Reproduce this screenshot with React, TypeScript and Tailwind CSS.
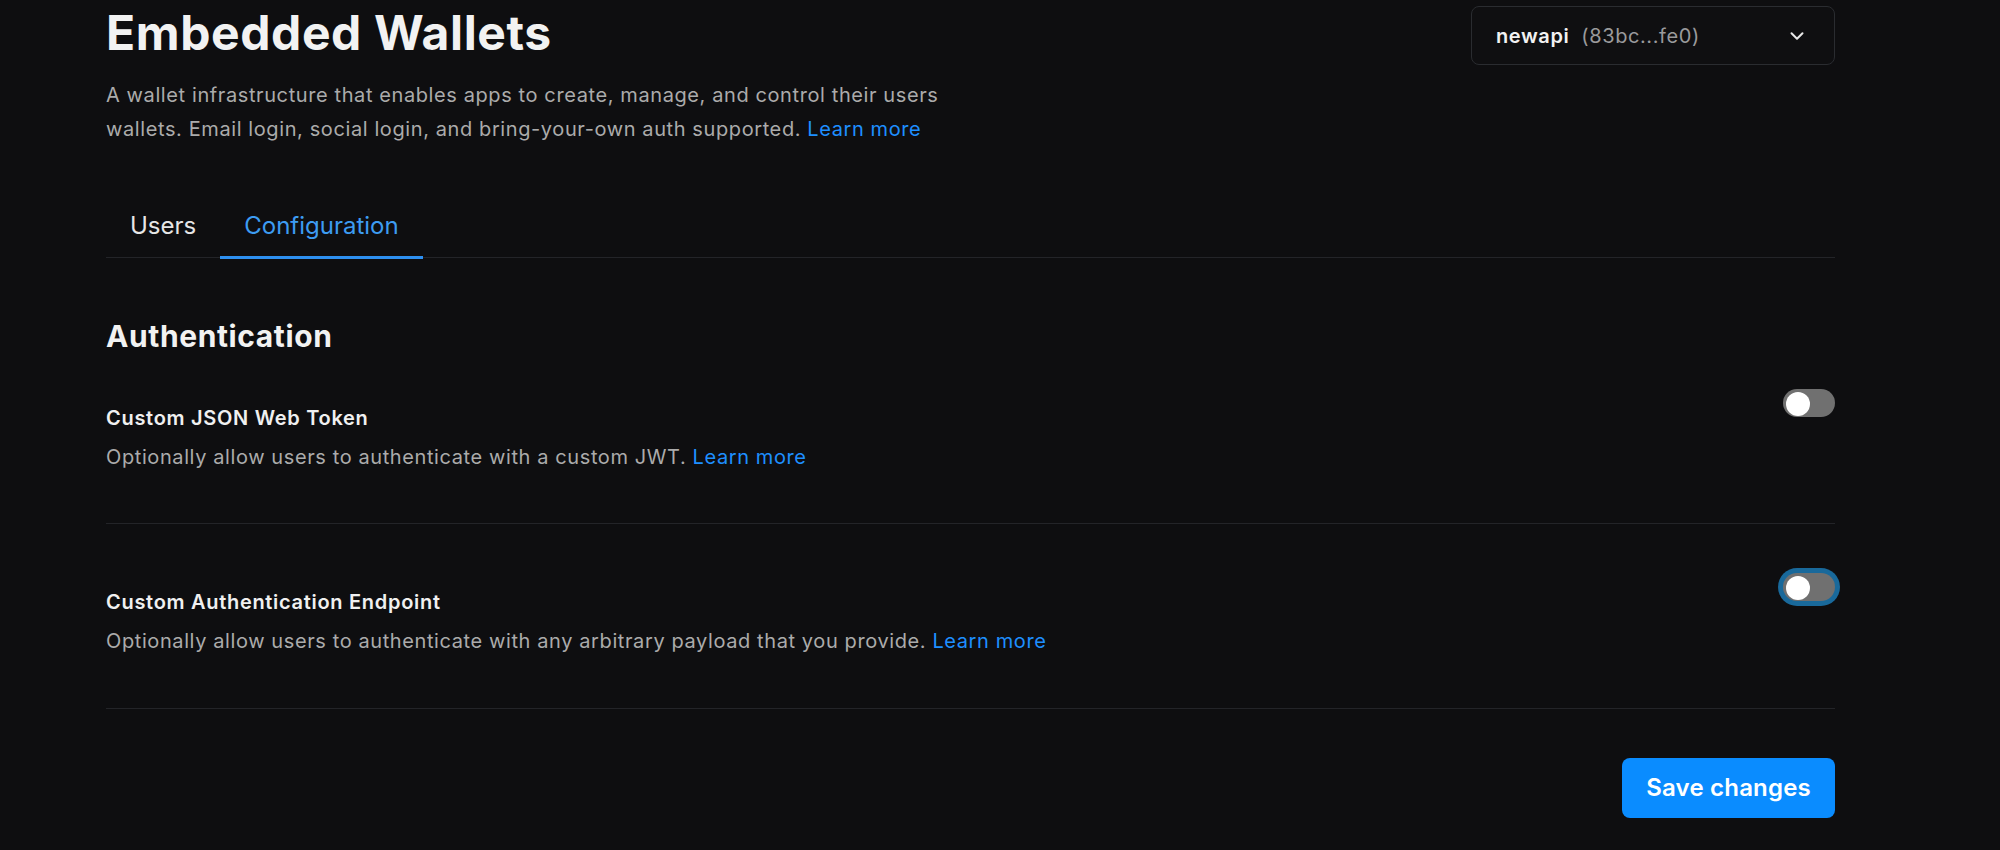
import React from "react";
import { ChevronDown } from "lucide-react";

function Toggle({ focused }: { focused?: boolean }) {
  return (
    <button
      type="button"
      className={
        "relative h-[28px] w-[52px] shrink-0 rounded-full bg-[#707070] " +
        (focused ? "ring-[5px] ring-[#19699b]" : "")
      }
    >
      <span className="absolute left-[3px] top-[3px] h-[24px] w-[24px] rounded-full bg-white" />
    </button>
  );
}

function Row({
  title,
  desc,
  focused,
  pad,
}: {
  title: string;
  desc: string;
  focused?: boolean;
  pad: string;
}) {
  return (
    <div className={"flex items-start justify-between border-b border-[#232428] " + pad}>
      <div className="mt-[15px]">
        <div className="text-[20px] font-semibold leading-7 tracking-[0.7px] text-[#f0f0f0]">{title}</div>
        <div className="mt-[11px] text-[20px] leading-7 tracking-[0.6px] text-[#ababab]">
          {desc} <span className="text-[#1e8fff]">Learn more</span>
        </div>
      </div>
      <Toggle focused={focused} />
    </div>
  );
}

export default function App() {
  return (
    <div className="min-h-[850px] w-full bg-[#0e0e10] font-[Inter,sans-serif]">
      <div className="ml-[106px] w-[1729px] pt-[6px]">
        <div className="flex items-start justify-between">
          <div className="mt-[3px]">
            <h1 className="text-[48px] font-bold leading-[48px] tracking-[0.6px] text-[#f2f2f2]">
              Embedded Wallets
            </h1>
            <p className="mt-[21px] max-w-[880px] text-[20px] leading-[34px] tracking-[0.6px] text-[#ababab]">
              A wallet infrastructure that enables apps to create, manage, and control their users
              wallets. Email login, social login, and bring-your-own auth supported.{" "}
              <span className="text-[#1e8fff]">Learn more</span>
            </p>
          </div>
          <div className="flex h-[59px] w-[364px] items-center justify-between rounded-lg border border-[#2a2c30] bg-[#0f0f11] pl-[24px] pr-[26px]">
            <div className="flex items-center text-[20px] tracking-[0.6px]">
              <span className="font-semibold text-[#f2f2f2]">newapi</span>
              <span className="ml-3 text-[#9a9a9c]">(83bc...fe0)</span>
            </div>
            <ChevronDown size={22} strokeWidth={2.2} className="text-[#e8e8e8]" />
          </div>
        </div>

        <div className="mt-[49px] flex border-b border-[#232428]">
          <div className="-mb-[2px] border-b-[3px] border-transparent px-6 pb-[14px] pt-[15px] text-[24px] leading-8 text-[#e6e6e6]">
            Users
          </div>
          <div className="-mb-[2px] border-b-[3px] border-[#2d8ff0] px-6 pb-[14px] pt-[15px] text-[24px] leading-8 text-[#3d9cf2]">
            Configuration
          </div>
        </div>

        <h2 className="mt-[60px] text-[30px] font-bold leading-9 tracking-[0.6px] text-[#f2f2f2]">
          Authentication
        </h2>

        <Row
          pad="pt-[35px] pb-[52px]"
          title="Custom JSON Web Token"
          desc="Optionally allow users to authenticate with a custom JWT."
        />
        <Row
          pad="pt-[49px] pb-[53px]"
          focused
          title="Custom Authentication Endpoint"
          desc="Optionally allow users to authenticate with any arbitrary payload that you provide."
        />

        <div className="mt-[49px] flex justify-end">
          <button
            type="button"
            className="h-[60px] rounded-lg bg-[#0a8cff] px-6 text-[24px] font-semibold tracking-[0.2px] text-white"
          >
            Save changes
          </button>
        </div>
      </div>
    </div>
  );
}
